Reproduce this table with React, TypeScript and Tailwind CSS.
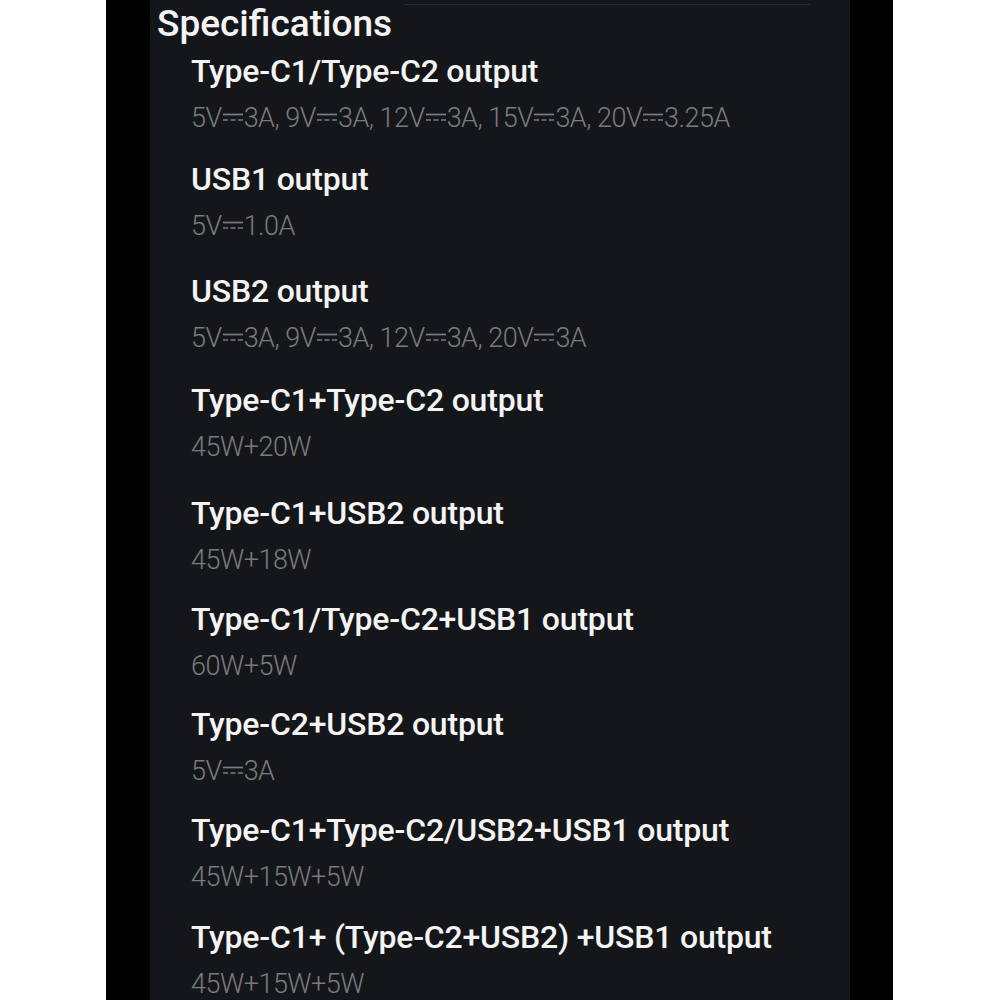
const specs = [
  { title: "Type-C1/Type-C2 output", value: "5V=3A, 9V=3A, 12V=3A, 15V=3A, 20V=3.25A", gap: "mt-0" },
  { title: "USB1 output", value: "5V=1.0A", gap: "mt-[23px]" },
  { title: "USB2 output", value: "5V=3A, 9V=3A, 12V=3A, 20V=3A", gap: "mt-[27px]" },
  { title: "Type-C1+Type-C2 output", value: "45W+20W", gap: "mt-[24px]" },
  { title: "Type-C1+USB2 output", value: "45W+18W", gap: "mt-[28px]" },
  { title: "Type-C1/Type-C2+USB1 output", value: "60W+5W", gap: "mt-[21px]" },
  { title: "Type-C2+USB2 output", value: "5V=3A", gap: "mt-[20px]" },
  { title: "Type-C1+Type-C2/USB2+USB1 output", value: "45W+15W+5W", gap: "mt-[21px]" },
  { title: "Type-C1+ (Type-C2+USB2) +USB1 output", value: "45W+15W+5W", gap: "mt-[22px]" },
];

function DcMark() {
  return (
    <svg width="20" height="9" viewBox="0 0 20 9" className="inline-block align-[5px] mx-[1px]">
      <line x1="0" y1="1.5" x2="20" y2="1.5" stroke="currentColor" strokeWidth="1.7" />
      <line x1="0" y1="7" x2="20" y2="7" stroke="currentColor" strokeWidth="1.7" strokeDasharray="5 2.5" />
    </svg>
  );
}

// "=" in the data stands for the DC symbol
function Value({ text }: { text: string }) {
  const parts = text.split("=");
  return (
    <>
      {parts.map((p, i) => (
        <span key={i}>
          {i > 0 && <DcMark />}
          {p}
        </span>
      ))}
    </>
  );
}

export default function App() {
  return (
    <div className="w-[1000px] h-[1000px] bg-white flex overflow-hidden" style={{ fontFamily: "Roboto, 'Liberation Sans', sans-serif" }}>
      <div className="ml-[106px] w-[787px] h-full bg-black pl-[44px]">
        <div className="w-[700px] h-full bg-[#15161a] pt-[4px]">
          <div className="ml-[254px] w-[406px] h-px bg-[#2a2b30]" />
          <h2 className="pl-[7px] text-[37px] leading-[38px] font-medium text-[#f4f4f4]">Specifications</h2>
          <div className="mt-[8px] pl-[41px] flex flex-col">
            {specs.map((s) => (
              <div key={s.title} className={s.gap}>
                <div className="text-[32px] leading-[40px] font-medium tracking-[-0.2px] text-[#f4f4f4] whitespace-nowrap">{s.title}</div>
                <div className="mt-[9px] text-[27px] leading-[36px] font-light tracking-[-0.5px] text-[#7a7b7f] whitespace-nowrap">
                  <Value text={s.value} />
                </div>
              </div>
            ))}
          </div>
        </div>
      </div>
    </div>
  );
}
